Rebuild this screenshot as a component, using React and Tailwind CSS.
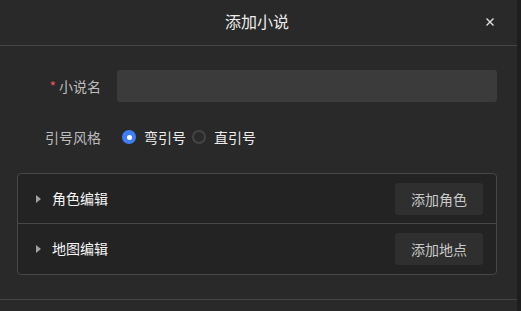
import { useState } from 'react';

const font = { fontFamily: '"Noto Sans CJK SC", "Noto Sans", sans-serif' };

const Radio = ({ checked, label, onClick }) => (
  <button type="button" onClick={onClick} className="flex items-center h-8">
    {checked ? (
      <span className="w-[14px] h-[14px] rounded-full bg-[#3f7ef7] flex items-center justify-center">
        <span className="w-[5px] h-[5px] rounded-full bg-white" />
      </span>
    ) : (
      <span className="w-[14px] h-[14px] rounded-full border-2 border-[#444444] bg-[#2a2a2a]" />
    )}
    <span className="ml-2 text-sm text-[#ececec]">{label}</span>
  </button>
);

const CollapseRow = ({ title, action, last }) => (
  <div className={`flex items-center h-[50px] pl-[18px] pr-[13px] ${last ? '' : 'border-b border-[#474747]'}`}>
    <svg width="5" height="8" viewBox="0 0 5 8" className="mr-[11px]">
      <path d="M0 0 L5 4 L0 8 Z" fill="#a0a0a0" />
    </svg>
    <span className="text-sm text-[#f5f5f5] -mt-[2px]">{title}</span>
    <button type="button" className="ml-auto w-[88px] h-8 rounded-[3px] bg-[#2f2f2f] text-sm text-[#c9c9c9]">
      {action}
    </button>
  </div>
);

export default function App() {
  const [quote, setQuote] = useState('curly');

  return (
    <div className="flex w-[521px] h-[311px] bg-[#1e1e1e] overflow-hidden" style={font}>
      <div className="w-[517px] h-full bg-[#292929] flex flex-col">
        {/* --- Header --- */}
        <div className="relative h-[46px] shrink-0 border-b border-[#454545] flex items-center justify-center">
          <span className="text-base text-[#ececec] -mt-[3px] -ml-[3px]">添加小说</span>
          <button type="button" className="absolute right-[22px] top-[17px] text-[#e0e0e0]">
            <svg width="10" height="10" viewBox="0 0 10 10">
              <path d="M1.5 1.5 L8.5 8.5 M8.5 1.5 L1.5 8.5" stroke="currentColor" strokeWidth="1.4" />
            </svg>
          </button>
        </div>

        {/* --- Body --- */}
        <div className="pt-6 pl-[17px] pr-[20px] pb-6 border-b border-[#454545]">
          <div className="flex items-center mb-[19px]">
            <label className="w-[100px] pr-4 text-right text-sm text-[#bdbdbd] -mt-[1px]">
              <span className="text-[#e0565b] mr-[3px]">*</span>小说名
            </label>
            <input className="flex-1 h-8 rounded-[3px] bg-[#3b3b3b] outline-none px-3 text-sm text-white" />
          </div>

          <div className="flex items-center mb-5">
            <label className="w-[100px] pr-4 text-right text-sm text-[#bdbdbd] -mt-[1px]">引号风格</label>
            <div className="flex items-center gap-[6px] pl-[5px]">
              <Radio checked={quote === 'curly'} label="弯引号" onClick={() => setQuote('curly')} />
              <Radio checked={quote === 'straight'} label="直引号" onClick={() => setQuote('straight')} />
            </div>
          </div>

          <div className="rounded-[4px] border border-[#474747] bg-[#232323]">
            <CollapseRow title="角色编辑" action="添加角色" />
            <CollapseRow title="地图编辑" action="添加地点" last />
          </div>
        </div>

        <div className="flex-1" />
      </div>
    </div>
  );
}
